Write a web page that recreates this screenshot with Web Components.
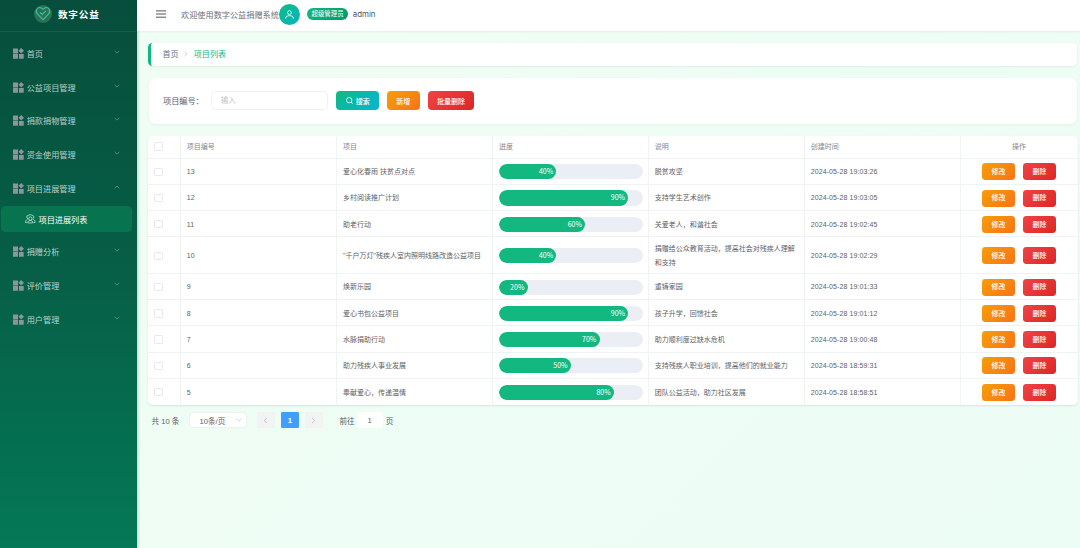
<!DOCTYPE html>
<html lang="zh-CN">
<head>
<meta charset="UTF-8">
<title>数字公益</title>
<style>
    html, body {
        margin: 0;
        height: 100%;
        overflow: hidden;
        font-family: "Liberation Sans", "Noto Sans CJK SC", sans-serif;
    }
</style>
</head>
<body>
<app-shell>
    <side-bar slot="side">
        <menu-item data-title="首页"></menu-item>
        <menu-item data-title="公益项目管理"></menu-item>
        <menu-item data-title="捐款捐物管理"></menu-item>
        <menu-item data-title="资金使用管理"></menu-item>
        <menu-item data-title="项目进展管理" open><sub-item>项目进展列表</sub-item></menu-item>
        <menu-item data-title="捐赠分析"></menu-item>
        <menu-item data-title="评价管理"></menu-item>
        <menu-item data-title="用户管理"></menu-item>
    </side-bar>
    <top-bar slot="top" data-user="admin" data-role="超级管理员">欢迎使用数字公益捐赠系统</top-bar>
    <bread-crumb data-home="首页">项目列表</bread-crumb>
    <search-bar></search-bar>
    <project-table></project-table>
    <page-nav data-total="10"></page-nav>
</app-shell>

<script>
const d = document;

class AppShell extends HTMLElement {
    constructor() {
        super();
        this.attachShadow({mode: "open"});
    }

    connectedCallback() {
        this.shadowRoot.innerHTML = `
            <style>
                :host {
                    display: grid;
                    grid-template-columns: 136.5px 1fr;
                    height: 548px;
                    background: #f0fdf4;
                }

                .right {
                    display: flex;
                    flex-direction: column;
                    min-width: 0;
                }

                main {
                    flex: 1;
                    display: flex;
                    flex-direction: column;
                    padding: 12px 2px 0 11.7px;
                    background: linear-gradient(135deg, #f0fdf4, #ecfdf5);
                }
            </style>
            <slot name="side"></slot>
            <div class="right">
                <slot name="top"></slot>
                <main><slot></slot></main>
            </div>
        `;
    }
}

class SideBar extends HTMLElement {
    constructor() {
        super();
        this.attachShadow({mode: "open"});
    }

    connectedCallback() {
        this.shadowRoot.innerHTML = `
            <style>
                :host {
                    display: block;
                    background: linear-gradient(180deg, #064e3b, #065f46 50%, #047857);
                    box-shadow: 1px 0 3px rgba(6, 78, 59, .25);
                    z-index: 1;
                }

                header {
                    display: flex;
                    align-items: center;
                    justify-content: center;
                    gap: 6px;
                    height: 32px;
                    box-sizing: border-box;
                    padding: 0 3px 3px 0;
                    border-bottom: 1px solid rgba(255, 255, 255, .07);
                    color: #fff;
                    font-size: 9.6px;
                    font-weight: 700;
                    letter-spacing: .8px;
                }

                nav {
                    padding-top: 4.5px;
                }
            </style>
            <header>
                <svg width="18" height="18" viewBox="0 0 18 18" fill="none">
                    <circle cx="9" cy="9" r="9" fill="#2d7058"/>
                    <path d="M9 14.600 3.300 8.900C.4 5.600 4.200 1 7.600 3.200L9 4.400l1.400-1.200c3.400-2.200 7.200 2.400 4.300 5.700Z" stroke="#34c796" stroke-width="1.100"/>
                    <path d="m6 7.500 2.200 2 3.800-3.600" stroke="#34c796" stroke-width="1.100"/>
                </svg>
                <span>数字公益</span>
            </header>
            <nav><slot></slot></nav>
        `;
    }
}

class MenuItem extends HTMLElement {
    constructor() {
        super();
        this.attachShadow({mode: "open"});
    }

    connectedCallback() {
        const arrow = this.hasAttribute("open") ? "M.6 3.400 3 1l2.400 2.400" : "M.6.8 3 3.200 5.400.8";

        this.shadowRoot.innerHTML = `
            <style>
                :host {
                    display: block;
                }

                div {
                    display: flex;
                    align-items: center;
                    height: 33.75px;
                    padding: 0 17px 0 13px;
                    color: rgba(255, 255, 255, .72);
                    font-size: 8.17px;
                }

                span {
                    flex: 1;
                    margin-left: 2.7px;
                }

                .arrow {
                    margin-bottom: 3px;
                }
            </style>
            <div>
                <svg width="11" height="11" viewBox="0 0 11 11" fill="#909399">
                    <path d="M0 .5h5v5H0zM0 6h5v4.7H0zM6 6h4.7v4.7H6zM8.2 0 11 2.7 8.2 5.5 5.5 2.7z"/>
                </svg>
                <span>${this.getAttribute("data-title")}</span>
                <svg class="arrow" width="6" height="4" viewBox="0 0 6 4" fill="none" stroke="#6f9d8b" stroke-width=".7"><path d="${arrow}"/></svg>
            </div>
            <slot></slot>
        `;
    }
}

class SubItem extends HTMLElement {
    constructor() {
        super();
        this.attachShadow({mode: "open"});
    }

    connectedCallback() {
        this.shadowRoot.innerHTML = `
            <style>
                :host {
                    display: flex;
                    align-items: center;
                    gap: 2.3px;
                    height: 26px;
                    margin: 1px 4.5px 2.6px 1.2px;
                    padding-left: 24px;
                    box-sizing: border-box;
                    border-radius: 4.5px;
                    background: #08734f;
                    color: #fff;
                    font-size: 8.17px;
                }
            </style>
            <svg width="11" height="10" viewBox="0 0 11 10" fill="none" stroke="#d6ebe3" stroke-width=".75">
                <circle cx="5.300" cy="4.600" r="1.700"/>
                <path d="M2.700 8.900c0-3.300 5.200-3.300 5.200 0zM3 4.800C1.200 4.300 1.300 1.400 3.400 1.300c1-.7 2.800-.7 3.800 0 2.100.1 2.200 3 .4 3.500M2.500 5.400C1.100 6 .5 6.900.5 8.500h1.300M8.100 5.400c1.400.6 2 1.500 2 3.100H8.800"/>
            </svg>
            <slot></slot>
        `;
    }
}

class TopBar extends HTMLElement {
    constructor() {
        super();
        this.attachShadow({mode: "open"});
    }

    connectedCallback() {
        this.shadowRoot.innerHTML = `
            <style>
                :host {
                    display: flex;
                    align-items: center;
                    height: 31px;
                    box-sizing: border-box;
                    padding: 0 0 3px 19.5px;
                    background: #fff;
                    box-shadow: 0 1px 2px rgba(6, 78, 59, .07);
                    color: #6b7280;
                    font-size: 8.17px;
                    z-index: 1;
                }

                .hello {
                    margin-left: 15px;
                    white-space: nowrap;
                }

                .face {
                    display: grid;
                    place-items: center;
                    width: 21px;
                    height: 21px;
                    border-radius: 50%;
                    background: linear-gradient(135deg, #10b981, #06b6c4);
                }

                .role {
                    margin: 0 4.5px 0 7px;
                    padding: 0 4.7px;
                    border-radius: 6px;
                    background: linear-gradient(135deg, #10b981, #059669);
                    color: #fff;
                    font-size: 6.4px;
                    line-height: 12px;
                }

                .user {
                    color: #4b5563;
                    font-family: Inter, "Noto Sans", sans-serif;
                    font-size: 7.9px;
                }
            </style>
            <svg width="10" height="8" viewBox="0 0 10 8" stroke="#4b5563" stroke-width="1"><path d="M0 .9h10M0 4h10M0 7.2h10"/></svg>
            <span class="hello"><slot></slot></span>
            <span class="face">
                <svg width="9" height="9" viewBox="0 0 9 9" fill="none" stroke="#fff" stroke-width=".85"><circle cx="4.5" cy="2.6" r="1.9"/><path d="M.7 8.7V8c0-3.1 7.6-3.1 7.6 0v.7"/></svg>
            </span>
            <span class="role">${this.getAttribute("data-role")}</span>
            <span class="user">${this.getAttribute("data-user")}</span>
        `;
    }
}

class BreadCrumb extends HTMLElement {
    constructor() {
        super();
        this.attachShadow({mode: "open"});
    }

    connectedCallback() {
        this.shadowRoot.innerHTML = `
            <style>
                :host {
                    display: flex;
                    align-items: center;
                    gap: 5.5px;
                    height: 22.5px;
                    box-sizing: border-box;
                    margin-right: 1px;
                    padding: 0 0 1px 11.3px;
                    border-left: 3px solid #10b981;
                    border-radius: 4.6px;
                    background: #fff;
                    box-shadow: 0 1px 2px rgba(6, 78, 59, .08);
                    color: #6b7280;
                    font-size: 8.1px;
                }

                b {
                    color: #10b981;
                    font-weight: 400;
                }
            </style>
            <span>${this.getAttribute("data-home")}</span>
            <svg width="4" height="6" viewBox="0 0 4 6" fill="none" stroke="#c0c4cc" stroke-width=".7"><path d="m.6.6 2.2 2.4L.6 5.4"/></svg>
            <b><slot></slot></b>
        `;
    }
}

class UiButton extends HTMLElement {
    constructor() {
        super();
        this.attachShadow({mode: "open"});
    }

    connectedCallback() {
        this.shadowRoot.innerHTML = `
            <style>
                :host {
                    display: inline-flex;
                    align-items: center;
                    justify-content: center;
                    gap: 3.2px;
                    height: 18.7px;
                    padding: 0 9.3px;
                    border-radius: 4px;
                    color: #fff;
                    font-size: 7px;
                    font-weight: 500;
                    white-space: nowrap;
                }

                :host([kind=search]) { background: linear-gradient(135deg, #10b981, #06b6d4); }
                :host([kind=warn]) { background: linear-gradient(135deg, #f59e0b, #f97316); }
                :host([kind=danger]) { background: linear-gradient(135deg, #ef4444, #dc2626); }

                :host([small]) {
                    width: 33px;
                    height: 17px;
                    padding: 0;
                    border-radius: 3.4px;
                }
            </style>
            <slot></slot>
        `;
    }
}

class SearchBar extends HTMLElement {
    constructor() {
        super();
        this.attachShadow({mode: "open"});
    }

    connectedCallback() {
        this.shadowRoot.innerHTML = `
            <style>
                :host {
                    display: flex;
                    align-items: center;
                    height: 45.5px;
                    margin: 12.5px 1px 12px .5px;
                    padding-left: 14.3px;
                    border-radius: 7px;
                    background: #fff;
                    box-shadow: 0 1px 3px rgba(6, 78, 59, .06);
                    color: #5b6270;
                    font-size: 8.17px;
                }

                label {
                    width: 48px;
                }

                .input {
                    width: 117px;
                    height: 19px;
                    box-sizing: border-box;
                    margin-right: 8.3px;
                    padding-left: 8.7px;
                    border: 1px solid #f0f1f3;
                    border-radius: 4.6px;
                    color: #c0c4cc;
                    font-size: 7.6px;
                    line-height: 17px;
                }

                ui-button {
                    margin-right: 8px;
                }
            </style>
            <label>项目编号：</label>
            <div class="input">输入</div>
            <ui-button kind="search"><svg width="7" height="7" viewBox="0 0 7 7" fill="none" stroke="#fff" stroke-width=".8"><circle cx="3.2" cy="3.2" r="2.7"/><path d="m5.1 5.1 1.6 1.6"/></svg>搜索</ui-button>
            <ui-button kind="warn">新增</ui-button>
            <ui-button kind="danger">批量删除</ui-button>
        `;
    }
}

class ProgressBar extends HTMLElement {
    constructor() {
        super();
        this.attachShadow({mode: "open"});
    }

    connectedCallback() {
        const value = this.getAttribute("value");

        this.shadowRoot.innerHTML = `
            <style>
                :host {
                    display: block;
                    height: 15.2px;
                    border-radius: 8px;
                    background: #ebeef5;
                    overflow: hidden;
                }

                div {
                    width: ${value}%;
                    height: 100%;
                    box-sizing: border-box;
                    padding-right: 3.4px;
                    border-radius: 8px;
                    background: #13b881;
                    color: #fff;
                    font: 7px/15.4px "Noto Sans CJK SC", sans-serif;
                    text-align: right;
                }
            </style>
            <div>${value}%</div>
        `;
    }
}

const rows = [
    [13, "爱心化春雨 扶贫点对点", 40, "脱贫攻坚", "2024-05-28 19:03:26"],
    [12, "乡村阅读推广计划", 90, "支持学生艺术创作", "2024-05-28 19:03:05"],
    [11, "助老行动", 60, "关爱老人，和谐社会", "2024-05-28 19:02:45"],
    [10, "\"千户万灯\"残疾人室内照明线路改造公益项目", 40, "捐赠给公众教育活动，提高社会对残疾人理解和支持", "2024-05-28 19:02:29"],
    [9, "焕新乐园", 20, "重铸家园", "2024-05-28 19:01:33"],
    [8, "爱心书包公益项目", 90, "孩子升学，回馈社会", "2024-05-28 19:01:12"],
    [7, "水脉捐助行动", 70, "助力顺利度过缺水危机", "2024-05-28 19:00:48"],
    [6, "助力残疾人事业发展", 50, "支持残疾人职业培训，提高他们的就业能力", "2024-05-28 18:59:31"],
    [5, "奉献爱心，传递温情", 80, "团队公益活动，助力社区发展", "2024-05-28 18:58:51"]
];

class ProjectTable extends HTMLElement {
    constructor() {
        super();
        this.attachShadow({mode: "open"});
    }

    connectedCallback() {
        this.shadowRoot.innerHTML = `
            <style>
                :host {
                    display: block;
                    border-radius: 5px;
                    background: #fff;
                    box-shadow: 0 1px 2px rgba(6, 78, 59, .12);
                    color: #606266;
                    font-size: 7px;
                    line-height: 13.4px;
                    overflow: hidden;
                    flex: none;
                }

                .row {
                    display: grid;
                    grid-template-columns: 33.1px 156.2px 156px 155.8px 155.9px 155.9px 1fr;
                    height: 26.2px;
                    box-sizing: border-box;
                    border-bottom: 1px solid #eff4f3;
                }

                .row.head {
                    height: 23.3px;
                    color: #85888d;
                }

                .row.tall {
                    height: 36.7px;
                }

                .row:last-child {
                    height: 26px;
                    border-bottom: 0;
                }

                .row > div {
                    display: flex;
                    align-items: center;
                    padding: 1px 5.5px 0;
                    border-right: 1px solid #eff4f3;
                }

                .row > div:first-child {
                    padding-left: 6px;
                }

                .row.head > div {
                    padding-top: 0;
                }

                .row > div:last-child {
                    justify-content: center;
                    gap: 8px;
                    padding-right: 6.5px;
                    border-right: 0;
                }

                .date {
                    letter-spacing: .1px;
                }

                progress-bar {
                    flex: 1;
                }

                i {
                    width: 8.4px;
                    height: 8.4px;
                    box-sizing: border-box;
                    border: 1px solid #e6e9ee;
                    border-radius: 1.2px;
                }
            </style>
            <div class="row head">
                <div><i></i></div><div>项目编号</div><div>项目</div><div>进度</div><div>说明</div><div>创建时间</div><div>操作</div>
            </div>
            ${rows.map(([id, name, value, note, date]) => `
                <div class="row ${note.length > 20 ? "tall" : ""}">
                    <div><i></i></div>
                    <div>${id}</div>
                    <div>${name}</div>
                    <div><progress-bar value="${value}"></progress-bar></div>
                    <div>${note}</div>
                    <div class="date">${date}</div>
                    <div><ui-button small kind="warn">修改</ui-button><ui-button small kind="danger">删除</ui-button></div>
                </div>`).join("")}
        `;
    }
}

class PageNav extends HTMLElement {
    constructor() {
        super();
        this.attachShadow({mode: "open"});
    }

    connectedCallback() {
        this.shadowRoot.innerHTML = `
            <style>
                :host {
                    display: flex;
                    align-items: center;
                    height: 17px;
                    margin-top: 7px;
                    padding-left: 3.3px;
                    color: #606266;
                    font-size: 7.6px;
                    white-space: nowrap;
                }

                .total {
                    width: 37.5px;
                }

                .size, .jump, .btn {
                    display: flex;
                    align-items: center;
                    justify-content: center;
                    height: 16.4px;
                    box-sizing: border-box;
                    background: #fff;
                    border-radius: 4px;
                }

                .size {
                    width: 58px;
                    justify-content: space-between;
                    padding: 0 4px 0 9.5px;
                    border: 1px solid #edf1f0;
                    margin-right: 10px;
                }

                .btn {
                    width: 18px;
                    background: #f2f4f4;
                    border-radius: 1.2px;
                    margin-right: 6px;
                }

                .btn.on {
                    background: #409eff;
                    color: #fff;
                    font-weight: 700;
                }

                .btn.next {
                    margin-right: 16.5px;
                }

                .jump {
                    width: 26px;
                    margin: 0 3px 0 2px;
                }
            </style>
            <span class="total">共 ${this.getAttribute("data-total")} 条</span>
            <span class="size">10条/页<svg width="6" height="4" viewBox="0 0 6 4" fill="none" stroke="#c0c4cc" stroke-width=".7"><path d="M.5.6 3 3.1 5.5.6"/></svg></span>
            <span class="btn"><svg width="5" height="7" viewBox="0 0 5 7" fill="none" stroke="#b9bdc6" stroke-width=".8"><path d="M4 .8 1.2 3.5 4 6.2"/></svg></span>
            <span class="btn on">1</span>
            <span class="btn next"><svg width="5" height="7" viewBox="0 0 5 7" fill="none" stroke="#b9bdc6" stroke-width=".8"><path d="m1 .8 2.8 2.7L1 6.2"/></svg></span>
            前往<span class="jump">1</span>页
        `;
    }
}

customElements.define("app-shell", AppShell);
customElements.define("side-bar", SideBar);
customElements.define("menu-item", MenuItem);
customElements.define("sub-item", SubItem);
customElements.define("top-bar", TopBar);
customElements.define("bread-crumb", BreadCrumb);
customElements.define("ui-button", UiButton);
customElements.define("search-bar", SearchBar);
customElements.define("progress-bar", ProgressBar);
customElements.define("project-table", ProjectTable);
customElements.define("page-nav", PageNav);
</script>
</body>
</html>
